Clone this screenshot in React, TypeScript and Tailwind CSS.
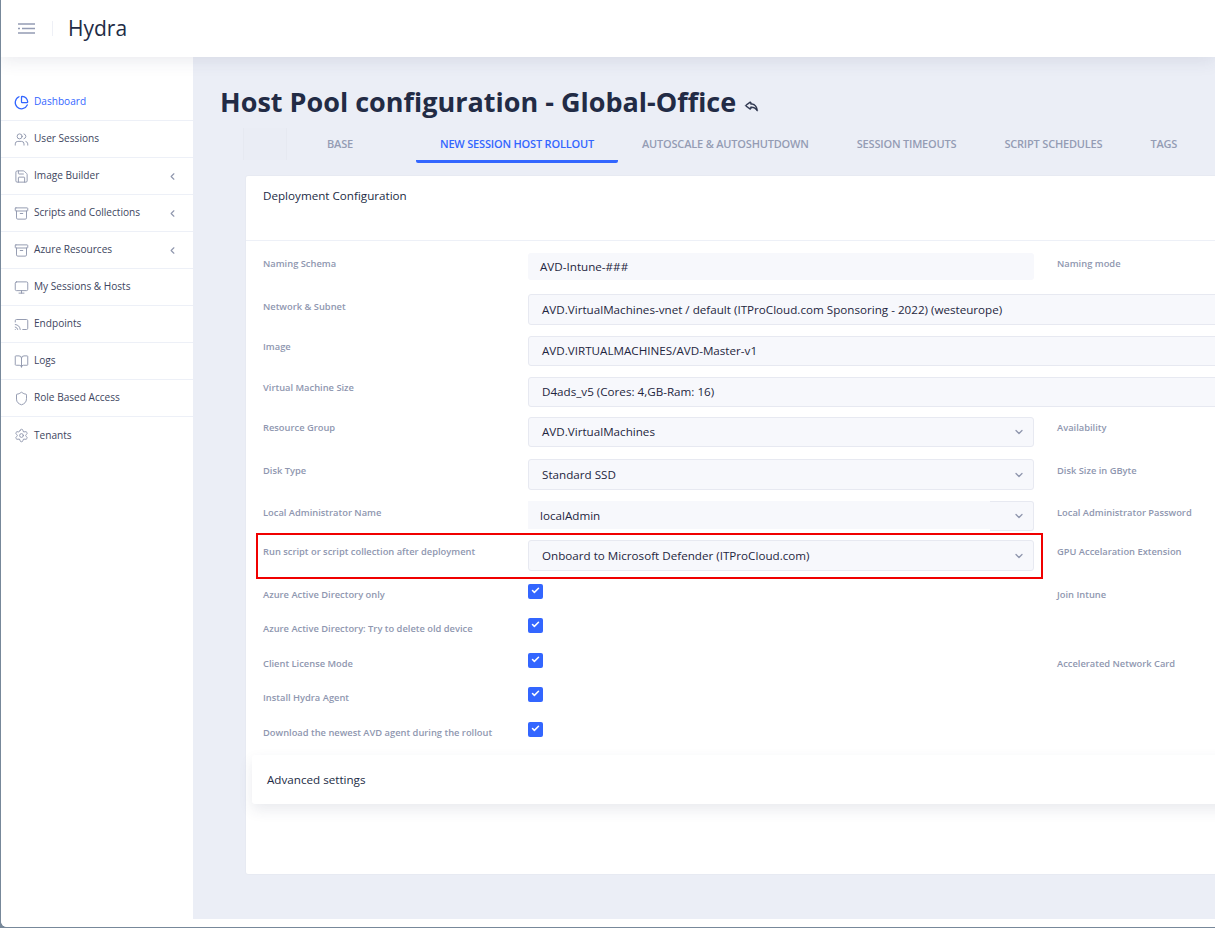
import { Archive, BookOpen, Cast, Check, ChartPie, ChevronDown, ChevronLeft, Monitor, Save, Settings, Shield, Users } from "lucide-react"
import { BsReply } from "react-icons/bs"

const nav = [
  { icon: ChartPie, label: "Dashboard", active: true },
  { icon: Users, label: "User Sessions" },
  { icon: Save, label: "Image Builder", arrow: true },
  { icon: Archive, label: "Scripts and Collections", arrow: true },
  { icon: Archive, label: "Azure Resources", arrow: true },
  { icon: Monitor, label: "My Sessions & Hosts" },
  { icon: Cast, label: "Endpoints" },
  { icon: BookOpen, label: "Logs" },
  { icon: Shield, label: "Role Based Access" },
  { icon: Settings, label: "Tenants" },
]

const tabs = [
  { label: "NEW SESSION HOST ROLLOUT", active: true },
  { label: "AUTOSCALE & AUTOSHUTDOWN" },
  { label: "SESSION TIMEOUTS" },
  { label: "SCRIPT SCHEDULES" },
  { label: "TAGS" },
]

const inputBase = "flex items-center rounded-[3px] bg-[#f7f8fc] text-[11.65px] text-[#1e2640]"
const inputBorder = "border border-[#e7e9f1]"

function Label({ children, className = "" }: { children: string; className?: string }) {
  return <div className={`text-[9.34px] font-semibold leading-[20px] whitespace-nowrap text-[#8f97b0] ${className}`}>{children}</div>
}

function Row({ label, right, className, labelClass = "", children }: { label: string; right?: string; className: string; labelClass?: string; children: React.ReactNode }) {
  return (
    <div className={`flex ${className}`}>
      <Label className={`w-[265px] shrink-0 ${labelClass}`}>{label}</Label>
      {children}
      {right && <Label className={`ml-[23px] ${labelClass}`}>{right}</Label>}
    </div>
  )
}

function Select({ value }: { value: string }) {
  return (
    <div className={`${inputBase} ${inputBorder} w-[506px] justify-between pl-[13px] pr-[8px]`}>
      <span>{value}</span>
      <ChevronDown className="w-[12px] h-[12px] text-[#8f96ad]" strokeWidth={2.5} />
    </div>
  )
}

function Tick() {
  return (
    <div className="w-[15px] h-[15px] rounded-[2px] bg-[#3366ff] flex items-center justify-center pb-[2px]">
      <Check className="w-[9px] h-[9px] text-white" strokeWidth={4} />
    </div>
  )
}

export default function App() {
  return (
    <div className="w-[1215px] h-[928px] overflow-hidden bg-[#77889a] font-['Open_Sans',sans-serif]">
      <div className="w-[1214px] h-[927px] ml-px bg-white rounded-bl-[6px] overflow-hidden flex flex-col">

        {/* header */}
        <div className="relative z-10 h-[57px] shrink-0 bg-white flex items-center shadow-[0_4px_16px_rgba(50,60,100,0.1)]">
          <svg viewBox="0 0 17 11" className="ml-[17px] w-[17px] h-[11px] text-[#949cb4]" fill="none" stroke="currentColor" strokeWidth="1.7">
            <path d="M0 1h17M4 5.5h13M0 5.5h2M0 10h17" />
          </svg>
          <div className="ml-[17px] w-px h-[15px] bg-[#eef0f6]" />
          <div className="ml-[15px] text-[21px] text-[#222b45]">Hydra</div>
        </div>

        <div className="flex-1 flex min-h-0">

          {/* sidebar */}
          <div className="w-[192px] shrink-0 pt-[27px] bg-white">
            {nav.map(({ icon: Icon, label, active, arrow }, i) => (
              <div key={label} className={`h-[37px] flex items-center pl-[13px] pr-[15px] ${i < nav.length - 1 ? "border-b border-[#edf0f7]" : ""}`}>
                <Icon className={`w-[15px] h-[15px] shrink-0 ${active ? "text-[#3366ff]" : "text-[#8f96ad]"}`} strokeWidth={active ? 2 : 1.5} />
                <span className={`ml-[5px] text-[10.1px] font-medium ${active ? "text-[#3366ff]" : "text-[#3d4560]"}`}>{label}</span>
                {arrow && <ChevronLeft className="ml-auto w-[11px] h-[11px] text-[#8f96ad]" strokeWidth={2.5} />}
              </div>
            ))}
          </div>

          {/* main */}
          <div className="flex-1 min-w-0 flex flex-col overflow-hidden">
            <div className="h-[862px] bg-[#ebeef6] overflow-hidden pl-[27px]">
              <div className="mt-[27px] h-[36px] flex items-center">
                <h1 className="text-[27px] font-bold leading-[36px] text-[#222b45] whitespace-nowrap">Host Pool configuration - Global-Office</h1>
                <BsReply className="ml-[8px] mt-[6px] w-[15px] h-[15px] text-[#222b45] stroke-current stroke-[0.5px]" />
              </div>

              {/* tabs */}
              <div className="mt-[8px] ml-[23px] h-[35px] flex items-start whitespace-nowrap">
                <div className="w-[44px] h-[32px] border-x border-[#e6e9f1] bg-[#eaedf5]" />
                <div className="w-[106px] h-[32px] mr-[23px] flex items-center justify-center text-[11px] font-semibold tracking-[-0.19px] text-[#949cb4]">BASE</div>
                {tabs.map((t) => (
                  <div key={t.label} className={`h-[35px] px-[24px] flex items-center text-[11px] font-semibold tracking-[-0.19px] ${t.active ? "border-b-[3px] border-[#3366ff] rounded-b-[2px] text-[#3366ff]" : "pb-[3px] text-[#949cb4]"}`}>
                    {t.label}
                  </div>
                ))}
              </div>

              {/* card */}
              <div className="mt-[12px] ml-[25px] w-[1000px] h-[700px] bg-white rounded-[3px] border border-[#e7eaf2]">
                <div className="h-[65px] border-b border-[#edf0f7] pl-[17px] pt-[10px] text-[11.65px] leading-[20px] text-[#222b45]">Deployment Configuration</div>

                <div className="pl-[17px] pt-[12px]">
                  <Row label="Naming Schema" right="Naming mode" labelClass="pt-px" className="h-[27px] mb-[14px]">
                    <div className={`${inputBase} w-[506px] pl-[12px]`}>AVD-Intune-###</div>
                  </Row>
                  <Row label="Network & Subnet" labelClass="pt-[3px]" className="h-[31px] mb-[11px]">
                    <div className={`${inputBase} ${inputBorder} w-[720px] pl-[13px]`}>AVD.VirtualMachines-vnet / default (ITProCloud.com Sponsoring - 2022) (westeurope)</div>
                  </Row>
                  <Row label="Image" labelClass="pt-px" className="h-[30px] mb-[11px]">
                    <div className={`${inputBase} ${inputBorder} w-[720px] pl-[13px]`}>AVD.VIRTUALMACHINES/AVD-Master-v1</div>
                  </Row>
                  <Row label="Virtual Machine Size" labelClass="pt-px" className="h-[30px] mb-[10px]">
                    <div className={`${inputBase} ${inputBorder} w-[720px] pl-[13px]`}>D4ads_v5 (Cores: 4,GB-Ram: 16)</div>
                  </Row>
                  <Row label="Resource Group" right="Availability" labelClass="pt-px" className="h-[30px] mb-[12px]">
                    <Select value="AVD.VirtualMachines" />
                  </Row>
                  <Row label="Disk Type" right="Disk Size in GByte" labelClass="pt-[2px]" className="h-[31px] mb-[11px]">
                    <Select value="Standard SSD" />
                  </Row>
                  <Row label="Local Administrator Name" right="Local Administrator Password" labelClass="pt-[2px]" className="h-[30px] mb-[9px]">
                    <div className="w-[506px] flex">
                      <div className={`${inputBase} w-[462px] h-[28px] pl-[12px] pt-[2px] rounded-none`}>localAdmin</div>
                      <div className={`${inputBorder} border-l-0 flex-1 rounded-r-[3px] bg-[#f7f8fc] flex items-center justify-end pr-[8px]`}>
                        <ChevronDown className="w-[12px] h-[12px] text-[#8f96ad]" strokeWidth={2.5} />
                      </div>
                    </div>
                  </Row>
                  <Row label="Run script or script collection after deployment" right="GPU Accelaration Extension" labelClass="pt-[2px]" className="relative h-[31px] mb-[13px]">
                    <Select value="Onboard to Microsoft Defender (ITProCloud.com)" />
                    <div className="absolute left-[-7px] top-[-7px] w-[787px] h-[46px] border-2 border-[#f00000] pointer-events-none" />
                  </Row>
                  <Row label="Azure Active Directory only" right="Join Intune" labelClass="pt-px" className="h-[15px] mb-[19px]"><div className="w-[506px]"><Tick /></div></Row>
                  <Row label="Azure Active Directory: Try to delete old device" labelClass="pt-px" className="h-[15px] mb-[20px]"><div className="w-[506px]"><Tick /></div></Row>
                  <Row label="Client License Mode" right="Accelerated Network Card" labelClass="pt-px" className="h-[15px] mb-[19px]"><div className="w-[506px]"><Tick /></div></Row>
                  <Row label="Install Hydra Agent" labelClass="pt-px" className="h-[15px] mb-[20px]"><div className="w-[506px]"><Tick /></div></Row>
                  <Row label="Download the newest AVD agent during the rollout" labelClass="pt-px" className="h-[15px]"><div className="w-[506px]"><Tick /></div></Row>
                </div>

                <div className="mt-[18px] ml-[6px] h-[49px] bg-white rounded-[3px] pl-[15px] flex items-center text-[11.65px] text-[#222b45] shadow-[0_6px_14px_rgba(50,60,100,0.1)]">Advanced settings</div>
              </div>
            </div>
            <div className="flex-1 bg-white" />
          </div>
        </div>
      </div>
    </div>
  )
}
